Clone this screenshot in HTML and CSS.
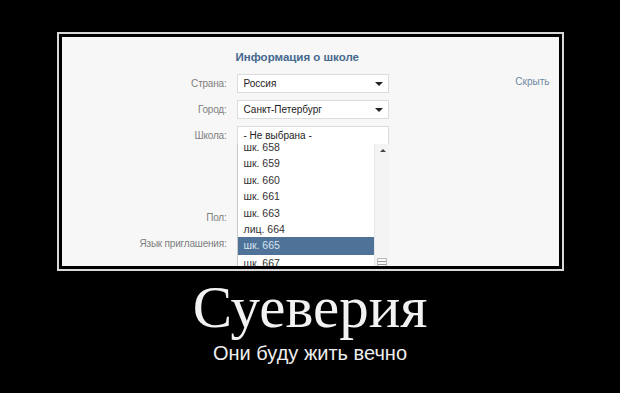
FILE: index.html
```html
<!DOCTYPE html>
<html lang="ru">
<head>
    <meta charset="UTF-8">
    <title>Суеверия</title>
    <link rel="stylesheet" href="styles.css">
</head>
<body>

<div class="frame">
    <div class="screen">
        <h2 class="title">Информация о школе</h2>
        <a class="hide-link">Скрыть</a>

        <div class="form">
            <div class="row">
                <span class="label">Страна:</span>
                <div class="select">Россия<span class="arrow"></span></div>
            </div>
            <div class="row">
                <span class="label">Город:</span>
                <div class="select">Санкт-Петербург<span class="arrow"></span></div>
            </div>
            <div class="row school-row">
                <span class="label">Школа:</span>
                <div class="select plain">- Не выбрана -</div>

                <!-- выпадающий список -->
                <div class="dropdown">
                    <ul class="options">
                        <li>шк. 658</li>
                        <li>шк. 659</li>
                        <li>шк. 660</li>
                        <li>шк. 661</li>
                        <li>шк. 663</li>
                        <li>лиц. 664</li>
                        <li class="active">шк. 665</li>
                        <li>шк. 667</li>
                    </ul>
                    <div class="scrollbar">
                        <span class="up"></span>
                        <span class="thumb"></span>
                    </div>
                </div>
            </div>
            <div class="row gap-row">
                <span class="label">Пол:</span>
            </div>
            <div class="row">
                <span class="label">Язык приглашения:</span>
            </div>
        </div>
    </div>
</div>

<div class="caption">
    <h1>Суеверия</h1>
    <p>Они буду жить вечно</p>
</div>

</body>
</html>
```

FILE: styles.css
```css
body {
    margin: 0;
    background-color: #000;
    font-family: "Liberation Sans", Arial, sans-serif;
}
.frame {
    width: 497px;
    margin: 32px auto 0;
    padding: 3px;
    border: 2px solid #d8d8d8;
}
.screen {
    position: relative;
    height: 229px;
    overflow: hidden;
    background-color: #f7f7f7;
    font-size: 10px;
    color: #222;
}
.title {
    margin: 0;
    padding-top: 14px;
    padding-left: 174px;
    font-size: 11.5px;
    font-weight: bold;
    color: #45688e;
}
.hide-link {
    position: absolute;
    top: 39px;
    right: 9px;
    color: #6f87a3;
    font-size: 10px;
}
.form {
    margin-top: 11px;
}
.row {
    display: flex;
    align-items: center;
    height: 19px;
    margin-bottom: 7px;
}
.label {
    width: 165px;
    padding-right: 10px;
    text-align: right;
    color: #808080;
    letter-spacing: -0.2px;
}
.select {
    position: relative;
    width: 144px;
    height: 17px;
    line-height: 18px;
    padding-left: 6px;
    background-color: #fff;
    border: 1px solid #dcdcdc;
}
.arrow {
    position: absolute;
    right: 5px;
    top: 7px;
    border-left: 4px solid transparent;
    border-right: 4px solid transparent;
    border-top: 4px solid #222;
}
.school-row {
    position: relative;
}
.dropdown {
    position: absolute;
    left: 175px;
    top: 18px;
    width: 151px;
    height: 130px;
    display: flex;
    background-color: #fff;
    border-left: 1px solid #c8c8c8;
    z-index: 2;
}
.options {
    list-style: none;
    margin: -5px 0 0;
    padding: 0;
    width: 136px;
}
.options li {
    height: 16.4px;
    line-height: 16.4px;
    padding-left: 6px;
    font-size: 10.5px;
    color: #333;
}
.options li.active {
    height: 17.5px;
    line-height: 17.5px;
    background-color: #4f7299;
    color: #d6e2ef;
}
.scrollbar {
    position: relative;
    flex: 1;
    background-color: #f4f4f4;
    border-left: 1px solid #e6e6e6;
}
.up {
    position: absolute;
    left: 5px;
    top: 5px;
    border-left: 3px solid transparent;
    border-right: 3px solid transparent;
    border-bottom: 3px solid #444;
}
.thumb {
    position: absolute;
    left: 2px;
    bottom: 3px;
    width: 8px;
    height: 11px;
    border: 1px solid #bbb;
    background: repeating-linear-gradient(#fafafa 0 2px, #999 2px 3px);
}
.gap-row {
    margin-top: 63px;
}
.caption {
    text-align: center;
    color: #fff;
}
.caption h1 {
    margin: 6px 0 0;
    font-family: "Liberation Serif", "Times New Roman", serif;
    font-weight: normal;
    font-size: 59px;
    line-height: 60px;
    color: #f2f2f2;
}
.caption p {
    margin: 5px 0 0;
    font-size: 20px;
    color: #eee;
}
```
